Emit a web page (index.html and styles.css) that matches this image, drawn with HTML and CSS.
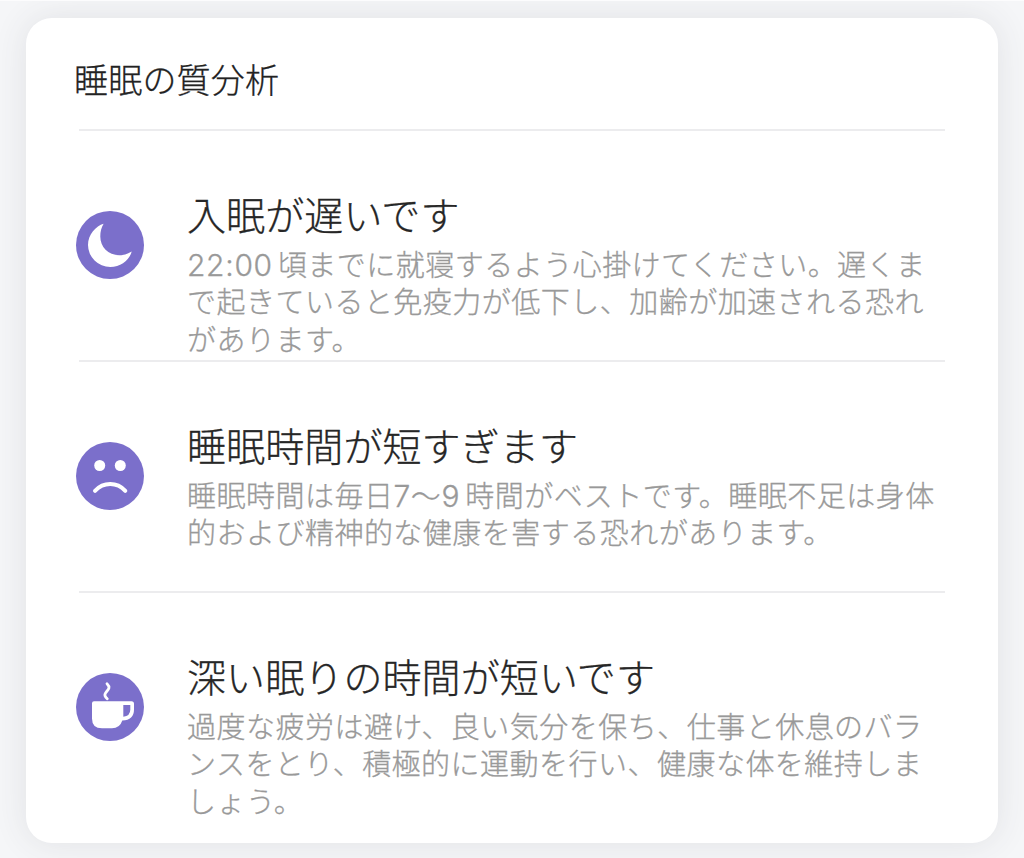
FILE: index.html
```html
<!DOCTYPE html>
<html lang="ja">
<head>
    <meta charset="utf-8">
    <title>睡眠の質分析</title>
    <link rel="stylesheet" href="styles.css">
</head>
<body>
    <div class="card">
        <h1 class="title">睡眠の質分析</h1>

        <div class="item">
            <svg class="icon" viewBox="0 0 68 68">
                <circle class="disc" cx="34" cy="34" r="34"/>
                <path class="fill" d="M27.6 12.7C20 14.8 12 23.500 12 34A22.200 22.200 0 0 0 34.200 56C45 56 53.700 48.800 55.700 40.500C51 43.500 47 44.200 43.500 44.200C32 44.200 24.300 36 24.300 25.500C24.300 20.500 25.300 16.500 27.600 12.700Z"/>
            </svg>
            <div class="text">
                <h2>入眠が遅いです</h2>
                <p><span class="num">22:00</span>頃までに就寝するよう心掛けてください。遅くま<br>で起きていると免疫力が低下し、加齢が加速される恐れ<br>があります。</p>
            </div>
        </div>

        <div class="item">
            <svg class="icon" viewBox="0 0 68 68">
                <circle class="disc" cx="34" cy="34" r="34"/>
                <circle class="fill" cx="23.700" cy="23.500" r="5.500"/>
                <circle class="fill" cx="44.300" cy="23.500" r="5.500"/>
                <path class="line" stroke-width="4" d="M19 48.800C27.500 39.700 41 39.700 49.300 48.800"/>
            </svg>
            <div class="text">
                <h2>睡眠時間が短すぎます</h2>
                <p>睡眠時間は毎日<span class="num">7〜9</span>時間がベストです。睡眠不足は身体<br>的および精神的な健康を害する恐れがあります。</p>
            </div>
        </div>

        <div class="item">
            <svg class="icon" viewBox="0 0 68 68">
                <circle class="disc" cx="34" cy="34" r="34"/>
                <path class="fill" d="M18 28.200H55.500Q58 28.200 58 30.700V36.500Q58 47 46.300 47.500Q43.800 55.300 36 55.300H26Q16 55.300 16 45.500V30.200Q16 28.200 18 28.200Z"/>
                <path class="disc" d="M47.300 32H54.300V36.500Q54.300 43 47.300 43.800Z"/>
                <path class="line" stroke-width="2.800" d="M31 10.700C37 16.500 27.500 18.500 29 22.800Q29.600 24.600 31.300 25.800"/>
            </svg>
            <div class="text">
                <h2>深い眠りの時間が短いです</h2>
                <p>過度な疲労は避け、良い気分を保ち、仕事と休息のバラ<br>ンスをとり、積極的に運動を行い、健康な体を維持しま<br>しょう。</p>
            </div>
        </div>
    </div>
</body>
</html>
```

FILE: styles.css
```css
* {
    box-sizing: border-box;
}
body {
    margin: 0;
    height: 858px;
    padding: 17px 26px 15px;
    overflow: hidden;
    border-top: 1px solid #fcfcfd;
    background-color: #f5f6f8;
    font-family: "Noto Sans CJK JP", sans-serif;
    font-weight: 300;
}
.card {
    height: 825px;
    padding: 0 53px 0 50px;
    border-radius: 26px;
    background-color: #fff;
    box-shadow: 0 0 34px rgba(60, 65, 75, 0.11);
}
.title {
    height: 110px;
    margin: 0 0 0 -2px;
    padding-top: 36px;
    font-size: 34px;
    line-height: 50px;
    letter-spacing: 0.2px;
    font-weight: 300;
    color: #222;
    -webkit-text-stroke: 0.3px #222;
}
.item {
    position: relative;
    display: flex;
    gap: 43px;
    height: 231px;
    padding-top: 58px;
}
.item::before {
    content: "";
    position: absolute;
    top: 1px;
    left: 3px;
    right: 0;
    height: 2px;
    background-color: #ececee;
}
.icon {
    flex: none;
    width: 68px;
    height: 68px;
    margin-top: 24.5px;
}
.disc {
    fill: #7b6fcb;
}
.fill {
    fill: #fff;
}
.line {
    fill: none;
    stroke: #fff;
    stroke-linecap: round;
}
.text {
    white-space: nowrap;
}
h2 {
    margin: 0;
    font-size: 39px;
    line-height: 54px;
    letter-spacing: 0.1px;
    font-weight: 300;
    color: #262626;
    -webkit-text-stroke: 0.3px #262626;
}
p {
    margin: 5px 0 0;
    font-size: 29px;
    line-height: 37.4px;
    letter-spacing: 0.48px;
    color: #999;
    -webkit-text-stroke: 0.3px #999;
}
.num {
    margin-right: 5px;
    font-family: Inter, "Noto Sans CJK JP", sans-serif;
    font-size: 30px;
    line-height: 0;
    letter-spacing: 0.7px;
}
```
